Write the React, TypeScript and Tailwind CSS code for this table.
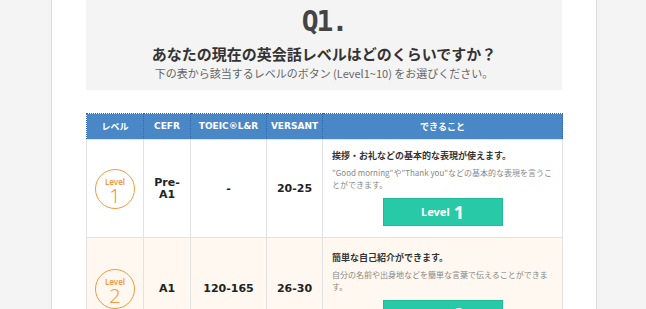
const jp = "font-['Noto_Sans_CJK_JP','Noto_Sans',sans-serif]";
const num = "font-['DejaVu_Sans','Noto_Sans_CJK_JP',sans-serif]";

interface Row {
  level: number;
  cefr: string;
  toeic: string;
  versant: string;
  title: string;
  desc: string;
  tint: boolean;
}

const rows: Row[] = [
  {
    level: 1,
    cefr: "Pre-A1",
    toeic: "-",
    versant: "20-25",
    title: "挨拶・お礼などの基本的な表現が使えます。",
    desc: "\"Good morning\"や\"Thank you\"などの基本的な表現を言うことができます。",
    tint: false,
  },
  {
    level: 2,
    cefr: "A1",
    toeic: "120-165",
    versant: "26-30",
    title: "簡単な自己紹介ができます。",
    desc: "自分の名前や出身地などを簡単な言葉で伝えることができます。",
    tint: true,
  },
];

const LevelBadge = ({ n }: { n: number }) => (
  <div className="mx-auto w-[40px] h-[40px] rounded-full border-[1.5px] border-[#f19a3e] flex flex-col items-center justify-center pt-[6px] text-[#f19a3e]">
    <span className="text-[8px] leading-[9px] font-semibold font-['Noto_Sans',sans-serif]">Level</span>
    <span className="text-[20px] leading-[20px] font-light font-['Noto_Sans',sans-serif]">{n}</span>
  </div>
);

const th = "border border-dotted border-[#2f68ad] text-white text-[9px] font-bold text-center h-[26px] p-0";
const td = `border border-[#e2e2e2] text-center align-middle text-[11px] font-bold text-[#222] px-[6px] leading-[12px] ${num}`;

export default function App() {
  return (
    <div className="min-h-screen bg-[#f4f4f4]">
      <div className="ml-[51px] w-[546px] min-h-screen bg-white border-x border-[#dcdcdc] px-[34px]">
        {/* ── Question header ── */}
        <div className="bg-[#f4f4f4] pt-[8px] pb-[10px] flex flex-col items-center">
          <p className="text-[28px] leading-[28px] font-bold tracking-[-2px] text-[#444] font-['DejaVu_Sans_Mono',monospace]">Q1.</p>
          <p className={`mt-[8px] text-[15px] leading-[20px] font-bold text-[#333] ${jp}`}>
            あなたの現在の英会話レベルはどのくらいですか？
          </p>
          <p className={`mt-[2px] text-[11px] leading-[14px] text-[#666] ${jp}`}>
            下の表から該当するレベルのボタン (Level1~10) をお選びください。
          </p>
        </div>

        {/* ── Level table ── */}
        <table className="mt-[23px] w-[476px] table-fixed border-collapse">
          <colgroup>
            <col className="w-[57px]" />
            <col className="w-[47px]" />
            <col className="w-[76px]" />
            <col className="w-[56px]" />
            <col className="w-[240px]" />
          </colgroup>
          <thead>
            <tr className="bg-[#4a87c7]">
              <th className={`${th} ${jp}`}>レベル</th>
              <th className={`${th} ${num}`}>CEFR</th>
              <th className={`${th} ${num}`}>TOEIC®L&amp;R</th>
              <th className={`${th} ${num}`}>VERSANT</th>
              <th className={`${th} ${jp}`}>できること</th>
            </tr>
          </thead>
          <tbody>
            {rows.map((r) => (
              <tr key={r.level} className={r.tint ? "bg-[#fff8f0]" : "bg-white"}>
                <td className={td}>
                  <LevelBadge n={r.level} />
                </td>
                <td className={td}>{r.cefr}</td>
                <td className={td}>{r.toeic}</td>
                <td className={td}>{r.versant}</td>
                <td className={`border border-[#e2e2e2] align-top px-[9px] pb-[11px] ${r.tint ? "pt-[14px]" : "pt-[10px]"}`}>
                  <p className={`text-[9px] leading-[12px] font-bold text-[#333] ${jp}`}>{r.title}</p>
                  <p className={`mt-[5px] text-[8px] leading-[12px] text-[#888] ${jp}`}>{r.desc}</p>
                  <button className="mt-[7px] mx-auto flex items-center justify-center gap-[4px] w-[120px] h-[28px] bg-[#27c9a6] border border-[#22bb99] text-white font-bold font-['Noto_Sans',sans-serif]">
                    <span className="text-[11px]">Level</span>
                    <span className="text-[18px] leading-none">{r.level}</span>
                  </button>
                </td>
              </tr>
            ))}
          </tbody>
        </table>
      </div>
    </div>
  );
}
